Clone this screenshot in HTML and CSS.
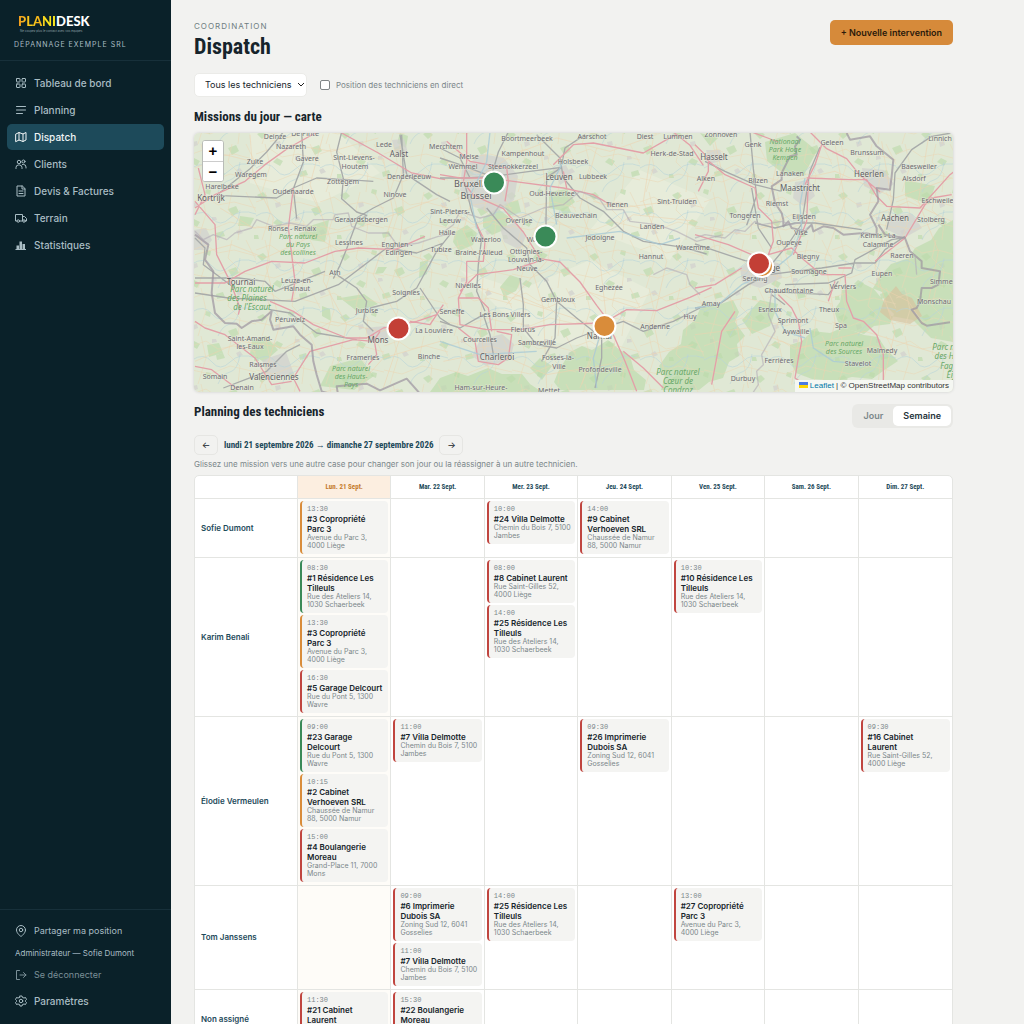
FILE: index.html
```html
<!DOCTYPE html>
<html lang="fr">
<head>
<meta charset="utf-8">
<meta name="viewport" content="width=device-width, initial-scale=1">
<title>Dispatch — Planidesk</title>
<link rel="stylesheet" href="styles.css">
</head>
<body>
<div class="app">
<aside class="sidebar">
  <div class="brand">
    <div class="logo"><span class="logo-a">PLANI</span><span>DESK</span></div>
    <div class="tagline">Ne coupez plus le contact avec vos équipes</div>
    <div class="company">DÉPANNAGE EXEMPLE SRL</div>
  </div>
  <nav class="nav">
    <a href="#"><svg class="icon" viewBox="0 0 24 24"><rect x="3" y="3" width="7" height="7" rx="1"/><rect x="14" y="3" width="7" height="7" rx="1"/><rect x="3" y="14" width="7" height="7" rx="1"/><rect x="14" y="14" width="7" height="7" rx="1"/></svg>Tableau de bord</a>
    <a href="#"><svg class="icon" viewBox="0 0 24 24"><path d="M3 5h18M3 12h18M3 19h12"/></svg>Planning</a>
    <a href="#" class="active"><svg class="icon" viewBox="0 0 24 24"><path d="M2 6l6-3 8 3 6-3v15l-6 3-8-3-6 3zM8 3v15M16 6v15"/></svg>Dispatch</a>
    <a href="#"><svg class="icon" viewBox="0 0 24 24"><circle cx="8" cy="8" r="3.5"/><circle cx="17" cy="7" r="3"/><path d="M2 21v-2a5 5 0 0 1 5-5h2a5 5 0 0 1 5 5v2M15 13h2a5 5 0 0 1 5 5v2"/></svg>Clients</a>
    <a href="#"><svg class="icon" viewBox="0 0 24 24"><path d="M14 2H4v20h16V8zM14 2v6h6M8 12h8M8 17h8"/></svg>Devis &amp; Factures</a>
    <a href="#"><svg class="icon" viewBox="0 0 24 24"><path d="M4 18H1V5h14v13H9M15 9h4l4 4v5h-2"/><circle cx="6.500" cy="18" r="2.500"/><circle cx="18" cy="18" r="2.500"/></svg>Terrain</a>
    <a href="#"><svg class="icon solid" viewBox="0 0 24 24"><path d="M3 13h5v7H3zM9 5h5v15H9zM15 10h5v10h-5zM1 20h21v2H1z"/></svg>Statistiques</a>
  </nav>
  <div class="side-foot">
    <a href="#" class="dim"><svg class="icon" viewBox="0 0 24 24"><path d="M21 10c0 7-9 13-9 13S3 17 3 10a9 9 0 0 1 18 0z"/><circle cx="12" cy="10" r="3.500"/></svg>Partager ma position</a>
    <p class="who">Administrateur — Sofie Dumont</p>
    <a href="#" class="dim faint"><svg class="icon" viewBox="0 0 24 24"><path d="M9 3H3v18h6M10 12h12M17 7l5 5-5 5"/></svg>Se déconnecter</a>
    <a href="#"><svg class="icon" viewBox="0 0 24 24"><circle cx="12" cy="12" r="3.500"/><path d="M10 2h4l1 3 3 1 3-1 2 4-2 2v2l2 2-2 4-3-1-3 1-1 3h-4l-1-3-3-1-3 1-2-4 2-2v-2L1 9l2-4 3 1 3-1z"/></svg>Paramètres</a>
  </div>
</aside>

<main class="main">
  <header class="page-head">
    <div>
      <p class="eyebrow">COORDINATION</p>
      <h1>Dispatch</h1>
    </div>
    <button class="primary" type="button">+ Nouvelle intervention</button>
  </header>

  <div class="filters">
    <div class="select-wrap">
      <select aria-label="Technicien"><option>Tous les techniciens</option></select>
      <svg class="chevron" viewBox="0 0 8 8"><path d="M1 2l3 3 3-3"/></svg>
    </div>
    <label class="live"><input type="checkbox">Position des techniciens en direct</label>
  </div>

  <h2>Missions du jour — carte</h2>
  <section class="map" aria-label="Carte des missions">
    <svg class="map-canvas" viewBox="194 133 759 259" preserveAspectRatio="xMidYMid slice">
      <defs>
        <pattern id="lanes" width="64" height="48" patternUnits="userSpaceOnUse">
          <path class="lane" d="M0 10l14-5 12 8 16-3 22 6M9 0l5 22-8 26M40 0l-4 18 12 12-2 18M0 34l18 4 20-8 26 6M54 0l10 20"/>
          <path class="brook" d="M0 24q12-8 20 2t18 0 26-4M26 48q4-10 12-12t10-18"/>
        </pattern>
        <pattern id="copses" width="83" height="61" patternUnits="userSpaceOnUse">
          <path class="copse" d="M8 12l6-3 4 4-5 4zM40 6l5 1-1 5-5-2zM62 26l8-3 3 6-7 4zM24 40l4-4 6 3-3 5zM50 50l7-2 2 5-8 2zM5 52l4 0 1 4-5 0z"/>
          <path class="hamlet" d="M26 20l5-1 1 4-5 2zM70 48l4-2 3 4-5 2zM46 34l4 0 1 3-5 1z"/>
        </pattern>
      </defs>
      <rect class="land" x="194" y="133" width="759" height="259"/>
      <g class="field">
        <path d="M250 133h90l40 40-60 30-70-20zM460 270l60 20 70-30 60 30-30 60-90-10zM640 170l70 30-40 60-80-30z"/>
      </g>
      <rect x="194" y="133" width="759" height="259" fill="url(#copses)"/>
      <g class="wood">
        <path d="M455 232l12-7 10 8-4 12-14 6-6-9zM483 218l14-10 12 9-3 12-14 6-9-8zM549 192l18-3 8 13-12 9-14-3zM504 204l14-4 3 12-12 4zM538 250l10 5-8 8-7-5z"/>
        <path d="M765 142l30-9 22 18-12 22-20 2-18-14zM700 133l18 5-8 8z"/>
        <path d="M953 220l-14 8-8 12-16 8-6 10-18 6-12 14-6 10 10 12 8 16 22 4 18 18 22 4zM842 290l10-2 8-6 12 6 10 4 4 14 8 8-4 10-16 2-10 8-14-4-12-8-4-12 6-8zM760 300l18 4-8 22-18 8-10-14z"/>
        <path d="M790 345l12-4 10-10 18 2 14-6 20 8 14 2 8 12 12 12-12 8-14 10-20-2-16 4-24-2-16-6-6-12zM703 302l12 4 18-6 6 12-4 10 10 14-8 8 2 12-10 6-6 16-14 4-10 8h-38l4-14-6-10 10-14 12-8 2-14 12-10z"/>
        <path d="M570 352l12-6 10 4 16-10 12 10 10 6 4 14 12 10-2 10h-84l-6-8 4-10zM440 378l16-6 12 4 20-8 14 6 20 0 8 10 12 8H430zM340 298l24-4 14 10-20 8zM322 306l8 3 1 12-9-5zM330 366l30-8 14 18-20 14-34-4zM252 340l14-4 12 14-14 12-14-8zM207 345l12-2 4 10-14 4zM420 262l8-2-1 14-8 4zM378 267l9 0-4 6-8 1zM400 133l8 3-2 12-9-5zM240 216l14 2-4 8-12 0zM303 228l26-8-4 22-14-2z"/>
        <path d="M510 275l12 4-6 12-12 6-4-10zM530 368l10-10 12 8-10 14zM905 180l30 6-6 18-24-8z"/>
      </g>
      <g class="urban">
        <path d="M462 168l20-14 22 4 14 18-4 24-20 14-22-8-12-16zM500 228l16-6 10 14-6 14-16-8zM740 268l18-12 22 8 2 14-22 10-18-6zM480 340l22-6 12 10-4 16-24 6-14-10zM592 322l18 0 4 12-20 6zM795 182l14-2 6 16-12 10-10-8zM862 168l22 2 10 14-14 10-16-8zM888 216l24-2 10 14-18 10-16-8zM194 230l12-2 6 12-8 10h-10zM262 360l24-8 8 22-26 6zM552 168l14-3 6 12-12 8zM392 140l12-1 4 14-12 3zM706 150l14 0 4 10-14 4zM365 328l20-2 3 12-18 3z"/>
        <path class="moor" d="M884 300l12-14 6 8 10 4 10 18-12 8-20-4-10-8z"/>
      </g>
      <rect x="194" y="133" width="759" height="259" fill="url(#lanes)"/>
      <g transform="translate(190 128) scale(.333333)">
        <path class="road minor" d="M15 120l90-40 120 30 80-60 120 20 140-40M90 240l100 60 130-10 130 80 110-20 190 60M180 20l10 130 60 120-20 150 40 170-60 190M400 20l-40 150 60 160-20 130 70 130-40 180M580 90l30 170-60 180 90 160-60 180M15 380l110-30 100 40 130-60 150-30 240-90M15 700l140-60 130 20 140-80 150 30 190-70M630 50l10 200-20 180 60 130M240 40l90-20M500 780l80-90 170-50"/>
        <path class="road rail" d="M280 12l-50 60-50 50-100 80 180 8 50-30 70-30 90 5 80 5M335 12l5 90-30 80 10 90M455 12l-15 60 20 80-5 60 45 40 30 10-30 20-30 80-20 50-20 40M500 270l50-30 60-30 30-70-5-120M440 440l60 40 30 40-10 60 30 30M15 495l100 15 200 10 130-50 145-110 90 15 80-30M15 450h130l80 10 30 30 150-60M780 320l-40 50-60 110-60 40-80 20M690 480l60 90 30 20M15 330l30 30-5 50 80 60 15 10M240 545l60 10 80 60 120 20M100 780l130-50 60-60 40-20M630 20l20 120 90 60 40 20"/>
        <path class="road major" d="M15 240l60-40 90-40 60-50 70-50 90-50M15 220l60 70 5 90 40 80 30 80-5 20M15 465h90l60-35 80-30 100 5 90-35 70-10 110 5 90-40M240 520l70 30 60 40 100 40h60l50-30 100-20 60-20M330 790l-20-40 50-80 130-35 60 5 20-30M455 15l110 60 100 60 100 20M15 580l30 20 60 20 90 70 50 80 60-10M760 530l-40 60-60-10M550 620l10 60-25 30M310 180l-15 120 20 160-10 60M15 715l50 10 80 60M15 260l30-60-20-80"/>
        <path class="border" d="M15 320l40 30-10 45 25 35-5 65 10 60 30 30 35 2 15 13 30-20 30-5 30-25-5 25 10 30 60-10 20 25 35 30 5 50 10 40 15 50 50 15-5-30 90-8 40 20 80-35 40 45"/>
        <path class="region" d="M15 310l25 25 30-15 40 15 25-20 50-15 15-25 50 20 50-10 50 10 20-20 60 0 5-15 40-5 10 40 50 20 60 0 30 40 60-10 60-20 50-10"/>
      </g>
      <g transform="translate(440 128) scale(.333333)">
        <path class="road minor" d="M20 100l110 40 90-60 130-50 160 40 140-50M0 230l100 60 200-40 160 90 120-80 190 20M110 160l-40 150 60 120-10 190 40 160M300 40l20 180-60 150 50 170 10 240M470 60l-50 180 60 160 20 180-80 200M640 30l-30 190 70 180-40 180 40 190M180 480l140 60 120-50 150 50 170-70M120 480l220 70 120 40M320 400l-120 130M460 220l80 20 230-30M400 330l110 110M10 700l150-30 160 70 180-30 260-60"/>
        <path class="road rail" d="M205 12l-30 60-20 70M290 20l70 70 10 60 50 60 70 40 60 60 60 30 120 18 70 20M0 150l80 0 80-5 110-15 95-12M365 118l-45 30-2 130 0 30M0 90l60 20 80 30M75 170l20 80 30 80-10 80-5 80 25 60M140 240l50 60 70 60 10 50 50 50 30 60 60 50 50 40M240 450l10 80 0 70 40 50 60 10 60-30 80-30 60-20 60 30 90-30 80-40M350 520l-5 110-40 70M0 580l60 20 70-40 20 60 10 60M485 630l0 60-20 90M0 60l60 30 30 60M365 110l10-50 60-40"/>
        <path class="road major" d="M0 140l60 10h80l80 10 150 20 90 20 50 30M80 12l0 90-10 60 30 40 90 40 60 70 50 80 60 10 60 60 50 70 30 40M340 110l60-60 60-5 150 30 70-40 30-15M80 400l0 60-25 50 5 80 80 15 100 0 90-15 160-5 70-40 90 3 100-40 65-30M80 400h50l5-60-25-50M60 490l50-50 110-15 90-30M55 510h60l30 30 10 70M170 610l45 10-10 70-30 20-60-10-10-60-50-40M520 620l35 80 35 90M550 670l60 50 60 60M20 40l70 60 110 20 5 40-10 60M370 130l10 50M700 12l50 40 40 60"/>
        <path class="region" d="M0 320l40-30 20-40 60 20 40-10 20-30 60 40 70-30 60-10 50-40 60 25 20 30h50l20 35 80 10 60 20 60 30 80-20M640 440l40-20 60 20 10 30 30 30"/>
        <path class="river" d="M150 12l-10 90-50 100 20 100M370 100l-40 80 20 110M720 330l-60 20-120-40-160 20M480 620l-20 70 10 90M0 640l120 40 170-10"/>
      </g>
      <g transform="translate(695 128) scale(.333333)">
        <path class="road minor" d="M0 170l120-60 120 60 180-40 180 80 170-60M0 300l160 20 130-60 160 40 190-80 130 60M60 40l40 180-30 160 50 180 40 220M260 40l-40 180 50 150 50 200-30 200M420 50l30 170-60 170 30 190-40 190M560 40l30 180-50 200 60 190-40 170M700 30l-30 190 60 150-30 150M0 620l160-20 150 60 200-50 260 80M520 460l120 60 60 90"/>
        <path class="road rail" d="M770 15l-60 10-60 40-50 70-5 80-20 90M165 12l10 110 10 80-30 90M30 100l60 30 90 40 80 20M0 348l60 20 90 30 80 10 50-60 40-60 25-160 30-70M180 285l60 15 60-15h60l140 20M270 470l130-5 70-30 10-40 110-60 30-5M0 540l70-10 90-60 60-30 160-20 100-15 60 0 30-40 60-40M170 180l20 120 40 60M230 500l40 30M210 490l190 10 30-40"/>
        <path class="road major" d="M0 50l40 40 0 40-30 60M30 90l60 50 90 40 10 60 40 40 5 60-15 40 70-20 30 30 60 50h70l5 80 20 50 30 10 40 40 20 60 0 80 60 50M0 320l100 30 70 30M0 480l60-10 80-50M170 12l80 30M335 150l130 5 50 0 30 50 30 30 100 5 90-100 20-15M630 330l60-100 20-20 60-10M430 420l40 0M345 12l50 50 60 30 40 50 60 50M340 160l-5 120-40 100M250 500l40 40 20 40 10 60-10 50-10 60 60 40M120 550l-40 60-15 80-15 80M400 520l20-60M540 400l90-70M380 50l-20 60-30 60"/>
        <path class="border wide" d="M455 15l10 20 60-10 20 30 50 40-5 50-5 40-40-5 5 40-25 40 20 40 0 20-40-5-60 5-30-20-30-5-30 15-5-20-20 20-40-10-10-20-15 15 0-20-5-20-20-30-10-50 30-20 0-20 25-50 20-5-5-25 15-20-10-10"/>
        <path class="border wide" d="M550 290l20 30 60 10 15 40 35 30 0 20 55 10-5 40-20 10-30 0-5 40-10 20-15 5 30 40 15 8 70-10"/>
        <path class="region" d="M0 330l30-10 60 10 30-25 30 5 30-30 20 10 60-10 30 10 40-10M230 490l-10 70 20 50-40 70 5 30-20 20 5 40-20 30M660 380l5 60"/>
        <path class="river" d="M330 150l-15 80 5 70-30 80-60 50-90 40-70 60-70 10M345 600l10 60 60 40 110 10M240 480l0 70 30 60 60 20"/>
      </g>
      <g class="lbl">
        <text x="275" y="139">Deinze</text><text x="305" y="136">De Pinte</text><text x="291" y="149">Nazareth</text><text x="307" y="161">Gavere</text><text x="255" y="164">Zulte</text><text x="251" y="177">Waregem</text><text x="222" y="189">Harelbeke</text><text x="293" y="194">Oudenaarde</text><text x="211" y="201" class="city">Kortrijk</text>
        <text x="354" y="160">Sint-Lievens-</text><text x="355" y="169">Houtem</text><text x="384" y="147">Lede</text><text x="399" y="157" class="city">Aalst</text><text x="409" y="179">Denderleeuw</text><text x="343" y="184">Zottegem</text><text x="395" y="197">Ninove</text><text x="361" y="222">Geraardsbergen</text><text x="292" y="231">Ronse - Renaix</text><text x="349" y="245">Lessines</text><text x="397" y="247">Enghien -</text><text x="399" y="255">Edingen</text><text x="335" y="275">Ath</text><text x="241" y="285" class="city">Tournai</text><text x="297" y="283">Leuze-en-</text><text x="297" y="291">Hainaut</text><text x="406" y="295">Soignies</text><text x="367" y="313">Jurbise</text><text x="290" y="322">Péruwelz</text><text x="250" y="341">Saint-Amand-</text><text x="250" y="349">les-Eaux</text><text x="263" y="367">Raismes</text><text x="215" y="379">Somain</text><text x="274" y="380" class="city">Valenciennes</text><text x="242" y="390">Denain</text><text x="378" y="343" class="city">Mons</text><text x="363" y="360">Frameries</text><text x="429" y="359">Binche</text><text x="434" y="333">La Louvière</text><text x="452" y="314">Seneffe</text><text x="441" y="252">Tubize</text><text x="447" y="235">Halle</text><text x="450" y="214">Sint-Pieters-</text><text x="450" y="223">Leeuw</text>
        <text x="527" y="141">Boortmeerbeek</text><text x="592" y="139">Aarschot</text><text x="645" y="139">Diest</text><text x="678" y="139">Lummen</text><text x="446" y="149">Merchtem</text><text x="469" y="159">Meise</text><text x="523" y="156">Kampenhout</text><text x="463" y="169">Wemmel</text><text x="513" y="169">Steenokkerzeel</text><text x="573" y="164">Holsbeek</text><text x="672" y="156">Herk-de-Stad</text><text x="559" y="180" class="city">Leuven</text><text x="593" y="179">Lubbeek</text><text x="454" y="187" class="capital start">Bruxelles</text><text x="476" y="199" class="capital">Brussel</text><text x="552" y="196">Oud-Heverlee</text><text x="617" y="207">Tienen</text><text x="677" y="204">Sint-Truiden</text><text x="576" y="218">Beauvechain</text><text x="519" y="223">Overijse</text><text x="652" y="229">Landen</text><text x="486" y="242">Waterloo</text><text x="537" y="242">Wavre</text><text x="600" y="240">Jodoigne</text><text x="479" y="255">Braine-l'Alleud</text><text x="526" y="254">Ottignies-</text><text x="526" y="262">Louvain-la-</text><text x="527" y="271">Neuve</text><text x="651" y="259">Hannut</text><text x="693" y="250">Waremme</text><text x="468" y="288">Nivelles</text><text x="609" y="290">Eghezée</text><text x="558" y="302">Gembloux</text><text x="505" y="317">Les Bons Villers</text><text x="523" y="332">Fleurus</text><text x="537" y="345">Sambreville</text><text x="480" y="342">Courcelles</text><text x="497" y="360" class="city">Charleroi</text><text x="558" y="360">Fosses-la-</text><text x="559" y="369">Ville</text><text x="600" y="339" class="city">Namur</text><text x="655" y="329">Andenne</text><text x="690" y="319">Huy</text><text x="600" y="372">Profondeville</text><text x="481" y="390">Ham-sur-Heure-</text><text x="549" y="393">Mettet</text>
        <text x="721" y="137">Zonhoven</text><text x="753" y="147">Genk</text><text x="832" y="145">Geleen</text><text x="940" y="141">Linnich</text><text x="714" y="160" class="city">Hasselt</text><text x="867" y="155">Brunssum</text><text x="869" y="177" class="city">Heerlen</text><text x="919" y="169">Baesweiler</text><text x="914" y="181">Alsdorf</text><text x="790" y="176">Lanaken</text><text x="706" y="181">Alken</text><text x="758" y="183">Bilzen</text><text x="800" y="191" class="city">Maastricht</text><text x="777" y="206">Riemst</text><text x="745" y="218">Tongeren</text><text x="804" y="219">Eijsden</text><text x="939" y="203">Eschweiler</text><text x="895" y="221" class="city">Aachen</text><text x="931" y="222">Stolberg</text><text x="801" y="235">Visé</text><text x="878" y="238">Kelmis - La</text><text x="878" y="247">Calamine</text><text x="789" y="245">Oupeye</text><text x="808" y="259">Blegny</text><text x="902" y="258">Raeren</text><text x="770" y="271" class="city">Liège</text><text x="755" y="281">Seraing</text><text x="809" y="274">Soumagne</text><text x="882" y="276">Eupen</text><text x="789" y="293">Chaudfontaine</text><text x="843" y="289">Verviers</text><text x="948" y="284">Simmerath</text><text x="934" y="304">Monschau</text><text x="711" y="306">Amay</text><text x="770" y="312">Esneux</text><text x="829" y="312">Theux</text><text x="793" y="323">Sprimont</text><text x="841" y="328">Spa</text><text x="796" y="334">Aywaille</text><text x="882" y="353">Malmedy</text><text x="858" y="366">Stavelot</text><text x="779" y="363">Ferrières</text><text x="743" y="381">Durbuy</text>
      </g>
      <g class="park">
        <text x="298" y="239">Parc naturel</text><text x="298" y="247">du Pays</text><text x="298" y="255">des collines</text>
        <g class="big"><text x="252" y="292">Parc naturel</text><text x="247" y="301">des Plaines</text><text x="252" y="310">de l'Escaut</text><text x="678" y="375">Parc naturel</text><text x="678" y="384">Cœur de</text><text x="678" y="393">Condroz</text><text x="954" y="350">Parc naturel</text><text x="954" y="359">des Hautes</text><text x="954" y="369">Fagnes-</text><text x="954" y="378">Eifel</text></g>
        <text x="351" y="371">Parc naturel</text><text x="351" y="379">des Hauts-</text><text x="351" y="387">Pays</text>
        <text x="785" y="144">Nationaal</text><text x="785" y="152">Park Hoge</text><text x="785" y="160">Kempen</text>
        <text x="844" y="346">Parc naturel</text><text x="844" y="354">des Sources</text>
      </g>
      <g class="pins">
        <circle class="green" cx="494" cy="182.500" r="11"/><circle class="green" cx="545.500" cy="236.500" r="11"/><circle class="red" cx="398.500" cy="328.500" r="11"/><circle class="amber" cx="604.500" cy="326" r="11"/><circle class="amber" cx="762" cy="266" r="11"/><circle class="red" cx="759" cy="263.500" r="11"/>
      </g>
    </svg>
    <div class="zoomer"><button type="button" aria-label="Zoom avant">+</button><button type="button" aria-label="Zoom arrière">−</button></div>
    <div class="credit"><svg class="flag" viewBox="0 0 12 8"><path fill="#4c7be1" d="M0 0h12v4H0z"/><path fill="#ffd500" d="M0 4h12v4H0z"/></svg><a href="#">Leaflet</a> | © OpenStreetMap contributors</div>
  </section>

  <div class="plan-head">
    <h2>Planning des techniciens</h2>
    <div class="toggle"><button type="button">Jour</button><button type="button" class="on">Semaine</button></div>
  </div>
  <div class="week">
    <button type="button" aria-label="Semaine précédente">←</button>
    <span>lundi 21 septembre 2026 → dimanche 27 septembre 2026</span>
    <button type="button" aria-label="Semaine suivante">→</button>
  </div>
  <p class="hint">Glissez une mission vers une autre case pour changer son jour ou la réassigner à un autre technicien.</p>

  <div class="board">
  <table>
    <colgroup><col class="c-name"><col><col><col><col><col><col><col></colgroup>
    <thead><tr><td></td><th class="today">Lun. 21 Sept.</th><th>Mar. 22 Sept.</th><th>Mer. 23 Sept.</th><th>Jeu. 24 Sept.</th><th>Ven. 25 Sept.</th><th>Sam. 26 Sept.</th><th>Dim. 27 Sept.</th></tr></thead>
    <tbody>
      <tr><th scope="row">Sofie Dumont</th>
        <td class="today"><article class="card amber"><time>13:30</time><b>#3 Copropriété<br>Parc 3</b><p>Avenue du Parc 3,<br>4000 Liège</p></article></td>
        <td></td>
        <td><article class="card"><time>10:00</time><b>#24 Villa Delmotte</b><p>Chemin du Bois 7, 5100<br>Jambes</p></article></td>
        <td><article class="card"><time>14:00</time><b>#9 Cabinet<br>Verhoeven SRL</b><p>Chaussée de Namur<br>88, 5000 Namur</p></article></td>
        <td></td><td></td><td></td></tr>
      <tr><th scope="row">Karim Benali</th>
        <td class="today"><article class="card green"><time>08:30</time><b>#1 Résidence Les<br>Tilleuls</b><p>Rue des Ateliers 14,<br>1030 Schaerbeek</p></article>
          <article class="card amber"><time>13:30</time><b>#3 Copropriété<br>Parc 3</b><p>Avenue du Parc 3,<br>4000 Liège</p></article>
          <article class="card"><time>16:30</time><b>#5 Garage Delcourt</b><p>Rue du Pont 5, 1300<br>Wavre</p></article></td>
        <td></td>
        <td><article class="card"><time>08:00</time><b>#8 Cabinet Laurent</b><p>Rue Saint-Gilles 52,<br>4000 Liège</p></article>
          <article class="card"><time>14:00</time><b>#25 Résidence Les<br>Tilleuls</b><p>Rue des Ateliers 14,<br>1030 Schaerbeek</p></article></td>
        <td></td>
        <td><article class="card"><time>10:30</time><b>#10 Résidence Les<br>Tilleuls</b><p>Rue des Ateliers 14,<br>1030 Schaerbeek</p></article></td>
        <td></td><td></td></tr>
      <tr><th scope="row">Élodie Vermeulen</th>
        <td class="today"><article class="card green"><time>09:00</time><b>#23 Garage<br>Delcourt</b><p>Rue du Pont 5, 1300<br>Wavre</p></article>
          <article class="card amber"><time>10:15</time><b>#2 Cabinet<br>Verhoeven SRL</b><p>Chaussée de Namur<br>88, 5000 Namur</p></article>
          <article class="card"><time>15:00</time><b>#4 Boulangerie<br>Moreau</b><p>Grand-Place 11, 7000<br>Mons</p></article></td>
        <td><article class="card"><time>11:00</time><b>#7 Villa Delmotte</b><p>Chemin du Bois 7, 5100<br>Jambes</p></article></td>
        <td></td>
        <td><article class="card"><time>09:30</time><b>#26 Imprimerie<br>Dubois SA</b><p>Zoning Sud 12, 6041<br>Gosselies</p></article></td>
        <td></td><td></td>
        <td><article class="card"><time>09:30</time><b>#16 Cabinet<br>Laurent</b><p>Rue Saint-Gilles 52,<br>4000 Liège</p></article></td></tr>
      <tr><th scope="row">Tom Janssens</th>
        <td class="today"></td>
        <td><article class="card"><time>09:00</time><b>#6 Imprimerie<br>Dubois SA</b><p>Zoning Sud 12, 6041<br>Gosselies</p></article>
          <article class="card"><time>11:00</time><b>#7 Villa Delmotte</b><p>Chemin du Bois 7, 5100<br>Jambes</p></article></td>
        <td><article class="card"><time>14:00</time><b>#25 Résidence Les<br>Tilleuls</b><p>Rue des Ateliers 14,<br>1030 Schaerbeek</p></article></td>
        <td></td>
        <td><article class="card"><time>13:00</time><b>#27 Copropriété<br>Parc 3</b><p>Avenue du Parc 3,<br>4000 Liège</p></article></td>
        <td></td><td></td></tr>
      <tr><th scope="row">Non assigné</th>
        <td class="today"><article class="card"><time>11:30</time><b>#21 Cabinet<br>Laurent</b><p>Rue Saint-Gilles 52,<br>4000 Liège</p></article></td>
        <td><article class="card"><time>15:30</time><b>#22 Boulangerie<br>Moreau</b><p>Grand-Place 11, 7000<br>Mons</p></article></td>
        <td></td><td></td><td></td><td></td><td></td></tr>
    </tbody>
  </table>
  </div>
</main>
</div>
</body>
</html>
```
FILE: styles.css
```css
* { box-sizing: border-box; }
html { scrollbar-width: none; }
body { margin: 0; background: #f2f2f0; color: #16242b; font: 10px/14px Inter, "Liberation Sans", sans-serif; }
h1, h2, p { margin: 0; }
button, select, input { font: inherit; color: inherit; }
a { color: inherit; text-decoration: none; }

.app { display: flex; align-items: flex-start; min-height: 100vh; }

/* Sidebar */
.sidebar { position: sticky; top: 0; flex: none; width: 171px; height: 100vh; background: #0a2129; color: #a9bdc4; display: flex; flex-direction: column; }
.brand { height: 61px; padding: 14px 14px 0; border-bottom: 1px solid #17303a; }
.logo { padding-left: 4px; color: #fff; font: 900 13px/15px Lato, sans-serif; }
.logo-a { background: linear-gradient(90deg, #f39a1d, #fbd21d 35%, #f5b21a 55%, #f9e51d 75%); background-clip: text; -webkit-background-clip: text; color: transparent; }
.tagline { padding-left: 6px; font-size: 3px; line-height: 4px; color: #8ea0a6; }
.company { margin-top: 8px; font-size: 7px; line-height: 8px; letter-spacing: 1px; white-space: nowrap; }
.nav { padding: 9px 7px; display: flex; flex-direction: column; gap: 1px; flex: 1; }
.nav a, .side-foot a { display: flex; align-items: center; gap: 7px; height: 26px; padding: 0 8px; border-radius: 5px; font-weight: 500; }
.nav .active { background: #1d4a5a; color: #f2f6f7; }
.icon { flex: none; width: 12px; height: 12px; fill: none; stroke: currentColor; stroke-width: 2; stroke-linecap: round; stroke-linejoin: round; }
.icon.solid { fill: currentColor; stroke: none; }
.side-foot { border-top: 1px solid #17303a; padding: 8px 7px 10px; }
.side-foot .dim { font-size: 9px; font-weight: 400; }
.side-foot .faint { color: #7b9098; }
.who { padding: 0 8px; font-size: 8px; line-height: 18px; }

/* Page header */
.main { flex: 1; min-width: 0; max-width: 806px; padding: 20px 24px 24px 23px; }
.page-head { display: flex; justify-content: space-between; align-items: flex-start; }
.eyebrow { font-size: 8px; line-height: 12px; letter-spacing: 1px; color: #6e7d81; }
h1, h2, .week span, thead th { font-family: "Roboto Condensed", "Liberation Sans Narrow", "Liberation Sans", sans-serif; font-weight: 700; }
h1 { font-size: 22px; line-height: 30px; }
h2 { font-size: 13px; line-height: 16px; }
.primary { height: 25px; padding: 0 11px; border: 0; border-radius: 5px; background: #d68a3a; color: #2c1a0b; font-size: 9px; font-weight: 600; }
.filters { display: flex; align-items: center; gap: 13px; margin: 11px 0 12px; }
.select-wrap { position: relative; }
.select-wrap select { appearance: none; height: 24px; width: 113px; padding: 0 10px; border: 1px solid #ebebe8; border-radius: 5px; background: #fff; font-size: 9px; }
.chevron { position: absolute; right: 2px; top: 8px; width: 8px; height: 8px; fill: none; stroke: #222; stroke-width: 1; pointer-events: none; }
.live { display: flex; align-items: center; gap: 6px; font-size: 8px; color: #7b878a; }
.live input { appearance: none; width: 10px; height: 10px; margin: 0; border: 1px solid #808587; border-radius: 2px; background: #fff; }
.live input:checked { background: #1d4a5a; }

/* Map */
.map { position: relative; margin-top: 8px; border-radius: 5px; overflow: hidden; box-shadow: 0 0 3px #c9cbc8; }
.map-canvas { display: block; width: 100%; height: 259px; font-family: "Noto Sans", sans-serif; }
.land { fill: #e0e8d5; }
.field { fill: #e9eedc; opacity: .7; }
.wood { fill: #bcdbab; opacity: .65; }
.copse { fill: #c0dcb0; opacity: .7; }
.hamlet { fill: #d3d3ce; opacity: .8; }
.urban { fill: #d2d1cd; opacity: .75; }
.moor { fill: #d8bf9b; opacity: .8; }
.lane { fill: none; stroke: #ead5b4; stroke-width: 1; opacity: .5; }
.brook { fill: none; stroke: #b7d3d8; stroke-width: 1; opacity: .6; }
.road, .border, .region, .river { fill: none; stroke-linejoin: round; }
.minor { stroke: #eed2ae; stroke-width: 2; opacity: .8; }
.rail { stroke: #a8abaa; stroke-width: 4; }
.major { stroke: #e3a0a8; stroke-width: 4; }
.border { stroke: #9d949f; stroke-width: 6; opacity: .7; }
.region { stroke: #b3abb5; stroke-width: 4; opacity: .6; }
.river { stroke: #a9cad6; stroke-width: 4; opacity: .8; }
.lbl text { font-size: 7px; text-anchor: middle; fill: #6c6a70; paint-order: stroke; stroke: #eaeee2; stroke-width: 1; stroke-opacity: .6; }
.lbl .city { font-size: 8px; fill: #5f5d62; }
.lbl .capital { font-size: 9px; fill: #5f5d62; }
.lbl .start { text-anchor: start; }
.park text { font-size: 7px; font-style: italic; text-anchor: middle; fill: #68a868; }
.park .big text { font-size: 8px; }
.pins circle { stroke: #fff; stroke-width: 2; }
.pins .green { fill: #3a8a58; }
.pins .red { fill: #c33f36; }
.pins .amber { fill: #d98c3a; }
.zoomer { position: absolute; left: 8px; top: 7px; width: 22px; border: 1px solid #b9bcb8; border-radius: 3px; background: #fff; overflow: hidden; }
.zoomer button { display: block; width: 20px; height: 20px; padding: 0; border: 0; background: #fff; color: #000; font: 700 15px/20px "Liberation Sans", sans-serif; }
.zoomer button + button { border-top: 1px solid #ccc; }
.credit { position: absolute; right: 0; bottom: 0; padding: 0 4px; background: #f5f7f2; color: #333; font: 8px/12px "Liberation Sans", sans-serif; }
.credit a { color: #0078a8; }
.flag { width: 9px; height: 6px; margin-right: 2px; }

/* Planning */
.plan-head { display: flex; justify-content: space-between; margin-top: 12px; }
.toggle { display: flex; height: 24px; padding: 2px; border-radius: 6px; background: #e9e9e6; }
.toggle button { border: 0; border-radius: 5px; background: none; padding: 0 10px; font-size: 9px; font-weight: 600; color: #7b878a; }
.toggle .on { background: #fff; color: #26343b; }
.week { display: flex; align-items: center; gap: 6px; margin-top: 7px; }
.week button { width: 24px; height: 20px; padding: 0; border: 1px solid #e6e6e3; border-radius: 5px; background: none; font-size: 9px; }
.week span { color: #1d4a5a; font-size: 9px; line-height: 14px; }
.hint { margin: 2px 0 4px; font-size: 8px; line-height: 14px; color: #7b878a; }
.board { border: 1px solid #e4e5e2; border-radius: 5px; background: #fff; overflow: hidden; }
table { width: 100%; table-layout: fixed; border-collapse: separate; border-spacing: 0; }
.c-name { width: 103px; }
th, td { padding: 2px 2px 3px; border-bottom: 1px solid #e4e5e2; border-right: 1px solid #e4e5e2; vertical-align: top; }
th:last-child, td:last-child { border-right: 0; }
thead th { height: 23px; color: #1d4a5a; font-size: 7px; line-height: 12px; vertical-align: middle; }
thead .today { background: #fceee0; color: #c47a2c; }
tbody .today { background: #fefcf8; }
tbody th { padding-left: 6px; text-align: left; vertical-align: middle; font-size: 8px; line-height: 12px; font-weight: 600; color: #1d4a5a; }
.card { min-height: 43px; padding: 4px 0 4px 5px; border-left: 2px solid #c0453f; border-radius: 4px; background: #f4f4f2; white-space: nowrap; }
.card.green { border-color: #3a8a58; }
.card.amber { border-color: #d98c3a; }
.card + .card { margin-top: 2px; }
.card time { display: block; font: 7px/9px "Liberation Mono", monospace; color: #7b878a; }
.card b { display: block; font-size: 8px; line-height: 10px; font-weight: 600; }
.card p { font-size: 7px; line-height: 8px; color: #7b878a; }
```
